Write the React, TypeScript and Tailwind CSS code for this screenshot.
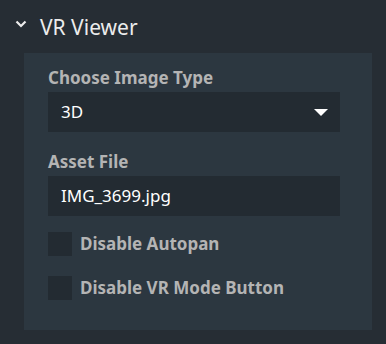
const font = { fontFamily: '"Noto Sans", "Open Sans", sans-serif' }

const Checkbox = ({ label }: { label: string }) => (
  <label className="flex items-center gap-2 h-6">
    <span className="block w-6 h-6 bg-[#232b32]" />
    <span className="text-[17px] font-bold text-[#b4b4b4] leading-6">{label}</span>
  </label>
)

const App = () => {
  return (
    <div className="w-[386px] h-[344px] bg-[#262d34] pt-[11px]" style={font}>
      <div className="flex items-center h-8 pl-[15px]">
        <svg width="12" height="8" viewBox="0 0 12 8" className="mt-[-7px]">
          <path d="M1.5 1.5l4.5 4.5 4.5-4.5" fill="none" stroke="#ececec" strokeWidth="2.2" />
        </svg>
        <span className="ml-[13px] text-[21px] text-[#ececec] leading-8">VR Viewer</span>
      </div>
      <div className="ml-6 mr-[14px] mt-[10px] h-[277px] bg-[#2c3740] pl-6 pr-8 pt-[10px]">
        <div className="text-[17px] font-bold text-[#b4b4b4] leading-[29px]">Choose Image Type</div>
        <div className="flex items-center justify-between h-10 bg-[#232b32] pl-[13px] pr-3">
          <span className="text-[17px] text-white">3D</span>
          <svg width="14" height="7" viewBox="0 0 14 7">
            <path d="M0 0h14L7 7z" fill="#fff" />
          </svg>
        </div>
        <div className="mt-[15px] text-[17px] font-bold text-[#b4b4b4] leading-[29px]">Asset File</div>
        <div className="flex items-center h-10 bg-[#232b32] pl-[13px]">
          <span className="text-[17px] text-white">IMG_3699.jpg</span>
        </div>
        <div className="mt-4 flex flex-col gap-5">
          <Checkbox label="Disable Autopan" />
          <Checkbox label="Disable VR Mode Button" />
        </div>
      </div>
    </div>
  )
}

export default App
